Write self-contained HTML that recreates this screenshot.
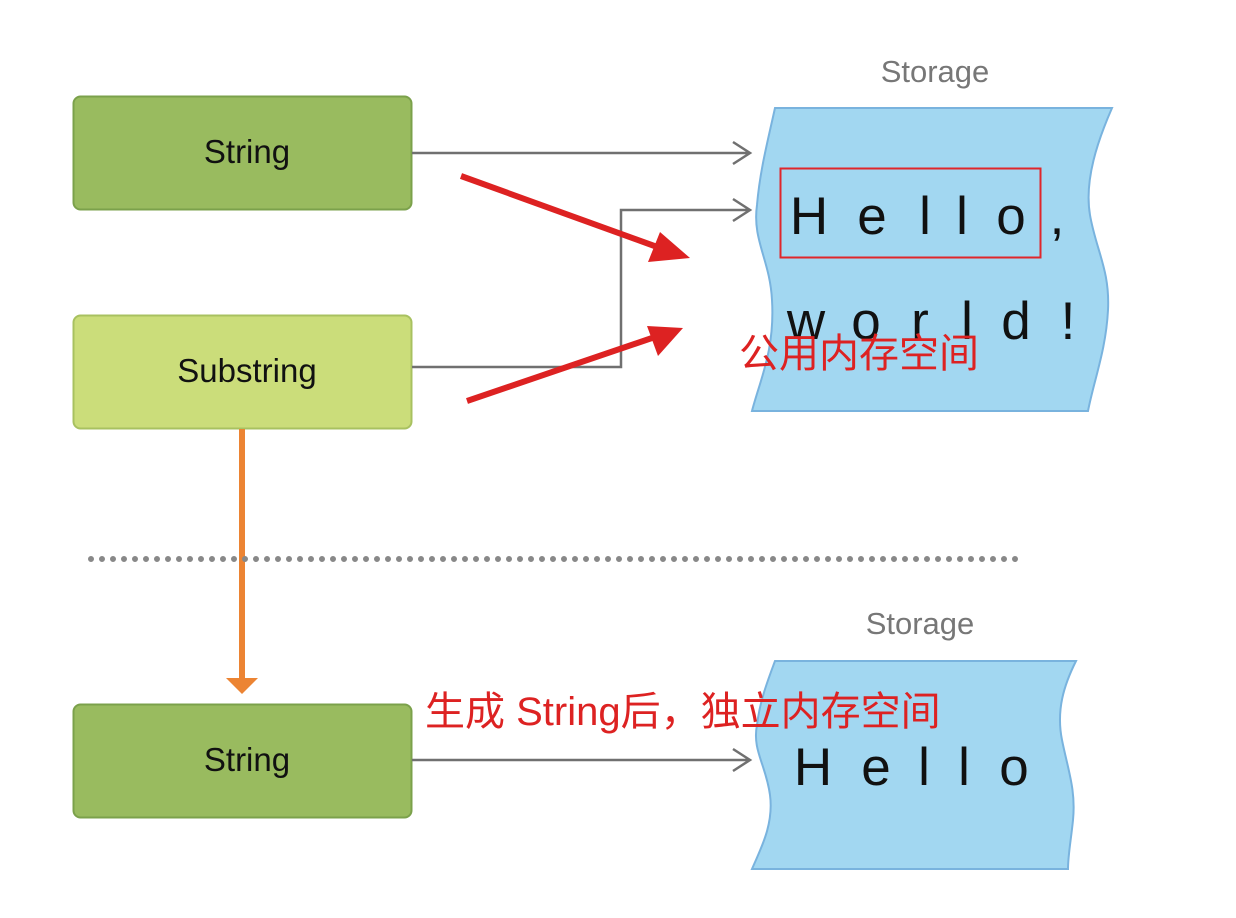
<!DOCTYPE html>
<html><head><meta charset="utf-8"><style>
html,body{margin:0;padding:0;background:#fff;width:1236px;height:918px;overflow:hidden}
svg{display:block}
</style></head><body>
<svg width="1236" height="918" viewBox="0 0 1236 918" xmlns="http://www.w3.org/2000/svg" font-family="Liberation Sans, DejaVu Sans, sans-serif">
<!-- boxes -->
<rect x="73.5" y="96.5" width="338" height="113" rx="7" fill="#99bb5f" stroke="#7ba14b" stroke-width="2"/>
<rect x="73.5" y="315.5" width="338" height="113" rx="7" fill="#cbdd7a" stroke="#a8c160" stroke-width="2"/>
<rect x="73.5" y="704.5" width="338" height="113" rx="7" fill="#99bb5f" stroke="#7ba14b" stroke-width="2"/>
<g font-size="33" fill="#111" text-anchor="middle">
<text x="247" y="163">String</text>
<text x="247" y="382">Substring</text>
<text x="247" y="771">String</text>
</g>
<!-- storage shapes -->
<path d="M775 108 L1112 108 C1098 140 1084 180 1090 215 C1096 250 1110 270 1108 310 C1106 350 1094 380 1088 411 L752 411 C760 380 775 350 772 300 C770 260 752 240 757 205 C760 170 768 140 775 108 Z" fill="#a2d7f1" stroke="#79b3de" stroke-width="2"/>
<path d="M775 661 L1076 661 C1064 685 1056 710 1062 740 C1068 770 1076 790 1073 820 C1071 840 1068 855 1068 869 L752 869 C760 850 774 825 770 795 C766 765 752 750 757 725 C760 700 768 680 775 661 Z" fill="#a2d7f1" stroke="#79b3de" stroke-width="2"/>
<g font-size="31" fill="#777" text-anchor="middle">
<text x="935" y="82">Storage</text>
<text x="920" y="634">Storage</text>
</g>
<g font-size="53" fill="#111" text-anchor="middle">
<text x="809" y="234">H</text><text x="872" y="234">e</text><text x="925" y="234">l</text><text x="962" y="234">l</text><text x="1011" y="234">o</text><text x="1057" y="234">,</text>
<text x="806" y="339">w</text><text x="866" y="339">o</text><text x="920" y="339">r</text><text x="967" y="339">l</text><text x="1016" y="339">d</text><text x="1068" y="339">!</text>
<text x="813" y="785">H</text><text x="876" y="785">e</text><text x="924" y="785">l</text><text x="964" y="785">l</text><text x="1014" y="785">o</text>
</g>
<rect x="780.5" y="168.5" width="260" height="89" fill="none" stroke="#e0262b" stroke-width="2"/>
<!-- gray lines -->
<g fill="none" stroke="#707070" stroke-width="2.5">
<path d="M412 153 L750 153 M733 142 L750 153 L733 164"/>
<path d="M412 367 L621 367 L621 210 L750 210 M733 199 L750 210 L733 221"/>
<path d="M412 760 L750 760 M733 749 L750 760 L733 771"/>
</g>
<!-- red arrows -->
<g stroke="#dd2222" stroke-width="6" fill="#dd2222">
<line x1="461" y1="176" x2="660" y2="248"/>
<line x1="467" y1="401" x2="652" y2="338"/>
</g>
<polygon points="690,258 648,262 660,232" fill="#dd2222"/>
<polygon points="683,328 658,356 647,326" fill="#dd2222"/>
<!-- orange -->
<line x1="242" y1="429" x2="242" y2="680" stroke="#ec8433" stroke-width="6"/>
<polygon points="226,678 258,678 242,694" fill="#ec8433"/>
<!-- dotted -->
<line x1="91" y1="559" x2="1026" y2="559" stroke="#888" stroke-width="6" stroke-linecap="round" stroke-dasharray="0 11"/>
<g font-size="40" fill="#dd2222" font-family="Liberation Sans, Noto Sans CJK SC, sans-serif">
<text x="739" y="367">公用内存空间</text>
<text x="425" y="725">生成 String后，独立内存空间</text>
</g>
</svg>
</body></html>
